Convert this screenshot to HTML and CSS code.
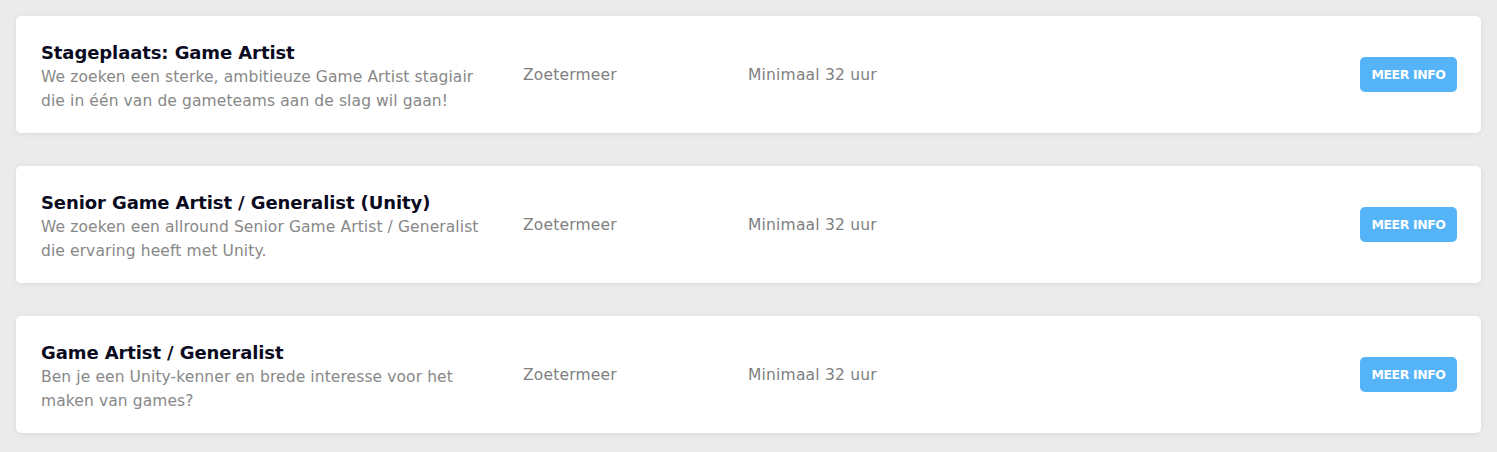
FILE: index.html
```html
<!DOCTYPE html>
<html lang="nl">
<head>
<meta charset="utf-8">
<title>Vacatures</title>
<link rel="stylesheet" href="styles.css">
</head>
<body>
<div class="list">
  <div class="card">
    <div class="info">
      <h3 class="title">Stageplaats: Game Artist</h3>
      <p class="desc">We zoeken een sterke, ambitieuze Game Artist stagiair die in één van de gameteams aan de slag wil gaan!</p>
    </div>
    <div class="meta">Zoetermeer</div>
    <div class="meta">Minimaal 32 uur</div>
    <a class="btn" href="#">MEER INFO</a>
  </div>
  <div class="card">
    <div class="info">
      <h3 class="title">Senior Game Artist / Generalist (Unity)</h3>
      <p class="desc">We zoeken een allround Senior Game Artist / Generalist die ervaring heeft met Unity.</p>
    </div>
    <div class="meta">Zoetermeer</div>
    <div class="meta">Minimaal 32 uur</div>
    <a class="btn" href="#">MEER INFO</a>
  </div>
  <div class="card">
    <div class="info">
      <h3 class="title">Game Artist / Generalist</h3>
      <p class="desc">Ben je een Unity-kenner en brede interesse voor het maken van games?</p>
    </div>
    <div class="meta">Zoetermeer</div>
    <div class="meta">Minimaal 32 uur</div>
    <a class="btn" href="#">MEER INFO</a>
  </div>
</div>
</body>
</html>
```

FILE: styles.css
```css
* { box-sizing: border-box; }
html, body { margin: 0; padding: 0; }
body {
  background: #ebebeb;
  font-family: "DejaVu Sans", "Noto Sans", sans-serif;
}
.list {
  padding: 16px 16px;
  display: flex;
  flex-direction: column;
  gap: 33px;
}
.card {
  background: #fff;
  border-radius: 5px;
  box-shadow: 0 1px 6px rgba(0, 0, 0, 0.07);
  height: 117px;
  padding: 0 24px 0 25px;
  display: grid;
  grid-template-columns: 482px 225px 1fr auto;
  align-items: center;
}
.info {
  width: 450px;
  padding-top: 5px;
}
.title {
  margin: 0;
  font-size: 18px;
  line-height: 24px;
  font-weight: 600;
  color: #0b0b1f;
  letter-spacing: -0.1px;
}
.desc {
  margin: 0;
  font-size: 15.5px;
  line-height: 24px;
  color: #888888;
  letter-spacing: 0.1px;
}
.meta {
  font-size: 15.5px;
  color: #808080;
  letter-spacing: 0.2px;
}
.btn {
  display: inline-flex;
  align-items: center;
  justify-content: center;
  width: 97px;
  height: 35px;
  background: #55b4f8;
  border-radius: 5px;
  color: #fff;
  font-size: 12.5px;
  font-weight: 700;
  text-decoration: none;
  letter-spacing: -0.4px;
}
```
